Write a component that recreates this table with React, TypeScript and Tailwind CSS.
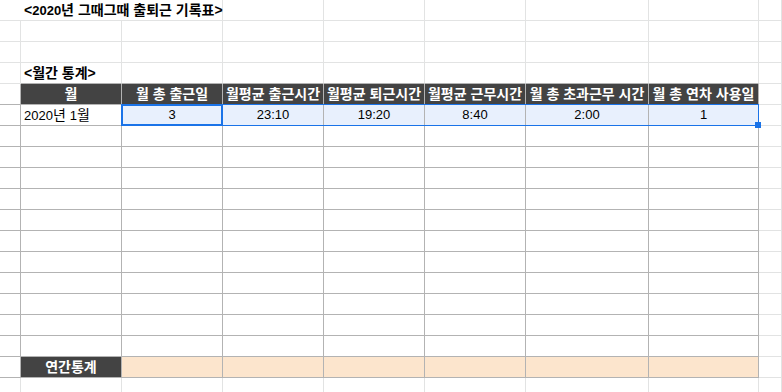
const COLS = ["21px", "101px", "101px", "101px", "101px", "101px", "123px", "110px"];

const headers = ["월", "월 총 출근일", "월평균 출근시간", "월평균 퇴근시간", "월평균 근무시간", "월 총 초과근무 시간", "월 총 연차 사용일"];
const values = ["3", "23:10", "19:20", "8:40", "2:00", "1"];

const LIGHT = "border-[#e2e3e3]";
const DARK = "border-[#b3b3b3]";

function Cell({
  className = "",
  children,
}: {
  className?: string;
  children?: React.ReactNode;
}) {
  return (
    <div className={`h-[21px] border-r border-b flex items-center overflow-visible whitespace-nowrap ${className}`}>
      {children !== undefined && <span>{children}</span>}
    </div>
  );
}

export default function App() {
  const rows: React.ReactNode[] = [];

  for (let r = 0; r < 19; r++) {
    const inTable = r >= 4 && r <= 17;
    for (let c = 0; c < 9; c++) {
      if (r === 0 && (c === 1 || c === 2)) continue;
      const key = `${r}-${c}`;
      const tableCol = c >= 1 && c <= 7;
      let border = LIGHT;
      if (inTable && (tableCol || c === 0)) border = DARK;
      if (r === 3 && tableCol) border = `${LIGHT} border-b-[#b3b3b3]`;

      if (r === 0 && c === 0) {
        rows.push(
          <Cell key={key} className={`${LIGHT} col-span-3 pl-[24px] font-bold`}>
            &lt;<span className="text-[13px]">2020</span>년 그때그때 출퇴근 기록표&gt;
          </Cell>
        );
        continue;
      }
      if (r === 3 && c === 1) {
        rows.push(
          <Cell key={key} className={`${LIGHT} border-b-[#b3b3b3] pl-[3px] font-bold`}>
            &lt;월간 통계&gt;
          </Cell>
        );
        continue;
      }
      if (r === 4 && tableCol) {
        rows.push(
          <Cell key={key} className={`${DARK} bg-[#434343] text-white font-bold justify-center`}>
            {headers[c - 1]}
          </Cell>
        );
        continue;
      }
      if (r === 5 && c === 1) {
        rows.push(
          <Cell key={key} className={`${DARK} pl-[3px]`}>
            <span className="text-[13px]">2020</span>년 <span className="text-[13px]">1</span>월
          </Cell>
        );
        continue;
      }
      if (r === 5 && c >= 2 && c <= 7) {
        rows.push(
          <Cell key={key} className={`${DARK} bg-[#e8f0fd] justify-center text-[13px]`}>
            {values[c - 2]}
          </Cell>
        );
        continue;
      }
      if (r === 17 && c === 1) {
        rows.push(
          <Cell key={key} className={`${DARK} bg-[#434343] text-white font-bold justify-center`}>
            연간통계
          </Cell>
        );
        continue;
      }
      if (r === 17 && c >= 2 && c <= 7) {
        rows.push(<Cell key={key} className={`${DARK} bg-[#fce5cd]`} />);
        continue;
      }
      rows.push(<Cell key={key} className={border} />);
    }
  }

  return (
    <div className="w-[782px] h-[392px] overflow-hidden bg-white text-[14px] leading-[16px] text-black font-['Liberation_Sans','Noto_Sans_CJK_KR',sans-serif]">
      <div className="relative">
        <div className="grid" style={{ gridTemplateColumns: `${COLS.join(" ")} 1fr` }}>
          {rows}
        </div>
        {/* selection overlay */}
        <div className="absolute left-[121px] top-[104px] w-[638px] h-[22px] border border-[#1a73e8] pointer-events-none" />
        <div className="absolute left-[121px] top-[104px] w-[102px] h-[22px] border-2 border-[#1a73e8] pointer-events-none" />
        <div className="absolute left-[755px] top-[122px] w-[6px] h-[6px] bg-[#1a73e8]" />
      </div>
    </div>
  );
}
